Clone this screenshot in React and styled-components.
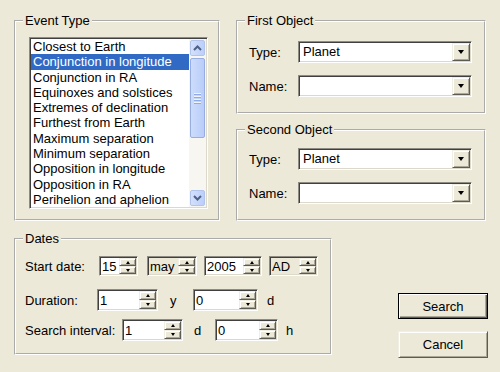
import React from 'react';
import styled, { createGlobalStyle } from 'styled-components';

const GlobalStyle = createGlobalStyle`
  html, body {
    margin: 0;
    padding: 0;
    background: #ece9d8;
  }
  body {
    font-family: "Liberation Sans", Tahoma, Arial, sans-serif;
    font-size: 13px;
    color: #000;
  }
`;

const Dialog = styled.div`
  width: 500px;
  height: 372px;
  box-sizing: border-box;
  padding: 13px 0 0 14px;
  display: flex;
  flex-direction: column;
  gap: 10px;
  overflow: hidden;
`;

const TopRow = styled.div`
  display: flex;
  gap: 16px;
`;

const Column = styled.div`
  display: flex;
  flex-direction: column;
  gap: 8px;
`;

const BottomRow = styled.div`
  display: flex;
`;

const Group = styled.fieldset`
  margin: 0;
  padding: 0;
  box-sizing: border-box;
  width: ${p => p.$w}px;
  height: ${p => p.$h}px;
  border: 2px groove #fff;
  min-width: 0;
`;

const Legend = styled.legend`
  margin-left: 7px;
  padding: 0 2px;
  line-height: 15px;
`;

const Body = styled.div`
  padding: ${p => p.$pad};
  display: flex;
  flex-direction: column;
`;

/* ---------- list box ---------- */

const ListBox = styled.div`
  width: 179px;
  height: 172px;
  box-sizing: border-box;
  display: flex;
  background: #fff;
  border: 1px solid;
  border-color: #8e8c82 #fff #fff #8e8c82;
  box-shadow: inset 1px 1px #404040, inset -1px -1px #dcd9cc;
  padding: 1px;
`;

const Items = styled.ul`
  flex: 1;
  margin: 0;
  padding: 0;
  list-style: none;
  overflow: hidden;
`;

const Item = styled.li`
  height: 15.3px;
  line-height: 15.3px;
  padding-left: 2px;
  white-space: nowrap;
  background: ${p => (p.$selected ? '#316ac5' : 'transparent')};
  color: ${p => (p.$selected ? '#fff' : '#000')};
`;

const ScrollBar = styled.div`
  width: 17px;
  display: flex;
  flex-direction: column;
  background: #f7f6f1;
  padding: 1px 0;
  box-sizing: border-box;
`;

const ScrollButton = styled.div`
  height: 16px;
  margin: 0 1px;
  border: 1px solid #b2c4ec;
  border-radius: 2px;
  background: linear-gradient(to right, #d3e0fd, #bccffa);
  display: flex;
  align-items: center;
  justify-content: center;
  box-sizing: border-box;
`;

const Thumb = styled.div`
  height: 80px;
  margin: 2px 1px 0;
  border: 1px solid #98aee0;
  border-radius: 2px;
  background: linear-gradient(to right, #cddcfc, #b9cdf9);
  display: flex;
  flex-direction: column;
  align-items: center;
  justify-content: center;
  gap: 1px;
  box-sizing: border-box;
`;

const Grip = styled.span`
  width: 7px;
  height: 1px;
  background: #eef3fe;
  border-bottom: 1px solid #8eabe6;
`;

const Track = styled.div`
  flex: 1;
`;

const Chevron = ({ up }) => (
  <svg width="9" height="6" viewBox="0 0 9 6">
    <polyline
      points={up ? '1,5 4.5,1.5 8,5' : '1,1 4.5,4.5 8,1'}
      fill="none"
      stroke="#4d6185"
      strokeWidth="2"
    />
  </svg>
);

/* ---------- combo ---------- */

const FieldRow = styled.div`
  display: flex;
  align-items: center;
  height: 22px;
  margin-top: ${p => p.$mt || 0}px;
`;

const FieldLabel = styled.span`
  width: ${p => p.$w}px;
  flex-shrink: 0;
  white-space: nowrap;
`;

const Sunken = styled.div`
  box-sizing: border-box;
  display: flex;
  align-items: stretch;
  border: 1px solid;
  border-color: #8e8c82 #fff #fff #8e8c82;
  box-shadow: inset 1px 1px #404040, inset -1px -1px #dcd9cc;
  padding: 1px;
`;

const Combo = styled(Sunken)`
  width: 174px;
  height: 22px;
  background: #fff;
`;

const ComboText = styled.span`
  flex: 1;
  padding-left: 3px;
  line-height: 18px;
`;

const Raised = styled.div`
  box-sizing: border-box;
  background: #ece9d8;
  border: 1px solid;
  border-color: #f1efe5 #5e5c52 #5e5c52 #f1efe5;
  box-shadow: inset 1px 1px #fff, inset -1px -1px #aca899;
  display: flex;
  align-items: center;
  justify-content: center;
`;

const DropButton = styled(Raised)`
  width: 18px;
`;

const DownTriangle = styled.span`
  width: 0;
  height: 0;
  border-left: ${p => p.$s}px solid transparent;
  border-right: ${p => p.$s}px solid transparent;
  border-top: ${p => p.$h}px solid #000;
`;

const UpTriangle = styled.span`
  width: 0;
  height: 0;
  border-left: ${p => p.$s}px solid transparent;
  border-right: ${p => p.$s}px solid transparent;
  border-bottom: ${p => p.$h}px solid #000;
`;

/* ---------- spin boxes ---------- */

const SpinBox = styled(Sunken)`
  width: ${p => p.$w}px;
  height: ${p => p.$h || 22}px;
  background: ${p => (p.$readOnly ? '#ece9d8' : '#fff')};
  margin-left: ${p => p.$ml || 0}px;
  flex-shrink: 0;
`;

const SpinText = styled.span`
  flex: 1;
  padding-left: 1px;
  display: flex;
  align-items: center;
`;

const SpinButtons = styled.div`
  width: 17px;
  display: flex;
  flex-direction: column;
`;

const SpinHalf = styled(Raised)`
  flex: 1;
`;

const Unit = styled.span`
  width: ${p => p.$w}px;
  padding-left: ${p => p.$pl}px;
  box-sizing: border-box;
  flex-shrink: 0;
`;

/* ---------- buttons ---------- */

const ButtonColumn = styled.div`
  margin-left: 66px;
  padding-top: 62px;
  display: flex;
  flex-direction: column;
  gap: 12px;
`;

const PushButton = styled.button`
  width: 90px;
  height: ${p => p.$h}px;
  font: inherit;
  color: #000;
  background: #ece9d8;
  padding: 0;
  border: 1px solid;
  border-color: ${p => (p.$default ? '#000' : '#f1efe5 #5e5c52 #5e5c52 #f1efe5')};
  box-shadow: ${p =>
    p.$default
      ? 'inset 1px 1px #fff, inset -1px -1px #5e5c52, inset -2px -2px #aca899'
      : 'inset 1px 1px #fff, inset -1px -1px #aca899'};
`;

const events = [
  'Closest to Earth',
  'Conjunction in longitude',
  'Conjunction in RA',
  'Equinoxes and solstices',
  'Extremes of declination',
  'Furthest from Earth',
  'Maximum separation',
  'Minimum separation',
  'Opposition in longitude',
  'Opposition in RA',
  'Perihelion and aphelion',
];

function Spin({ value, w, h, ml, readOnly }) {
  return (
    <SpinBox $w={w} $h={h} $ml={ml} $readOnly={readOnly}>
      <SpinText>{value}</SpinText>
      <SpinButtons>
        <SpinHalf>
          <UpTriangle $s={2.5} $h={3} />
        </SpinHalf>
        <SpinHalf>
          <DownTriangle $s={2.5} $h={3} />
        </SpinHalf>
      </SpinButtons>
    </SpinBox>
  );
}

function ComboField({ label, value, mt }) {
  return (
    <FieldRow $mt={mt}>
      <FieldLabel $w={49}>{label}</FieldLabel>
      <Combo>
        <ComboText>{value}</ComboText>
        <DropButton>
          <DownTriangle $s={3.5} $h={4} />
        </DropButton>
      </Combo>
    </FieldRow>
  );
}

export default function App() {
  return (
    <>
      <GlobalStyle />
      <Dialog>
        <TopRow>
          <Group $w={206} $h={208}>
            <Legend>Event Type</Legend>
            <Body $pad="9px 0 0 13px">
              <ListBox>
                <Items>
                  {events.map((e, i) => (
                    <Item key={e} $selected={i === 1}>
                      {e}
                    </Item>
                  ))}
                </Items>
                <ScrollBar>
                  <ScrollButton>
                    <Chevron up />
                  </ScrollButton>
                  <Thumb>
                    <Grip />
                    <Grip />
                    <Grip />
                    <Grip />
                  </Thumb>
                  <Track />
                  <ScrollButton>
                    <Chevron />
                  </ScrollButton>
                </ScrollBar>
              </ListBox>
            </Body>
          </Group>
          <Column>
            <Group $w={250} $h={101}>
              <Legend>First Object</Legend>
              <Body $pad="13px 0 0 11px">
                <ComboField label="Type:" value="Planet" />
                <ComboField label="Name:" value="" mt={12} />
              </Body>
            </Group>
            <Group $w={250} $h={99}>
              <Legend>Second Object</Legend>
              <Body $pad="11px 0 0 11px">
                <ComboField label="Type:" value="Planet" />
                <ComboField label="Name:" value="" mt={12} />
              </Body>
            </Group>
          </Column>
        </TopRow>
        <BottomRow>
          <Group $w={318} $h={124}>
            <Legend>Dates</Legend>
            <Body $pad="9px 0 0 9px">
              <FieldRow>
                <FieldLabel $w={74}>Start date:</FieldLabel>
                <Spin value="15" w={39} h={20} />
                <Spin value="may" w={50} h={20} ml={9} readOnly />
                <Spin value="2005" w={58} h={20} ml={7} />
                <Spin value="AD" w={49} h={20} ml={7} readOnly />
              </FieldRow>
              <FieldRow $mt={12}>
                <FieldLabel $w={72}>Duration:</FieldLabel>
                <Spin value="1" w={61} />
                <Unit $w={35} $pl={12}>y</Unit>
                <Spin value="0" w={65} />
                <Unit $w={20} $pl={9}>d</Unit>
              </FieldRow>
              <FieldRow $mt={8}>
                <FieldLabel $w={97}>Search interval:</FieldLabel>
                <Spin value="1" w={61} />
                <Unit $w={32} $pl={11}>d</Unit>
                <Spin value="0" w={63} />
                <Unit $w={20} $pl={8}>h</Unit>
              </FieldRow>
            </Body>
          </Group>
          <ButtonColumn>
            <PushButton $h={26} $default>
              Search
            </PushButton>
            <PushButton $h={27}>Cancel</PushButton>
          </ButtonColumn>
        </BottomRow>
      </Dialog>
    </>
  );
}
